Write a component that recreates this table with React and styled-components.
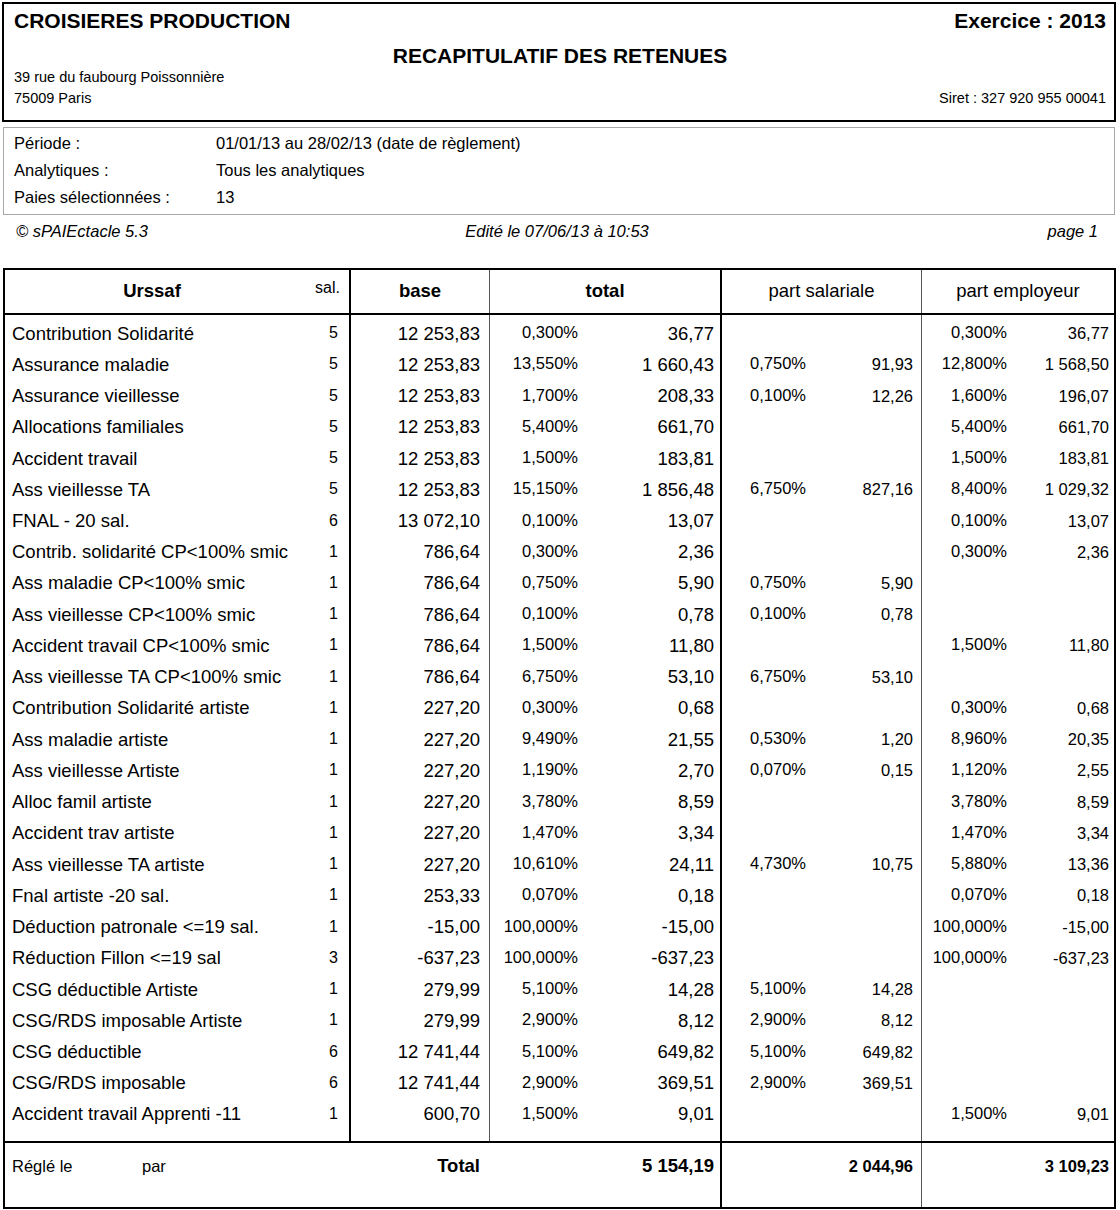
import React from 'react';
import styled, { createGlobalStyle } from 'styled-components';

const GlobalStyle = createGlobalStyle`
  html, body {
    margin: 0;
    padding: 0;
    background: #fff;
  }
  body {
    font-family: 'Liberation Sans', Arial, Helvetica, sans-serif;
    color: #000;
  }
`;

const rows = [
  ['Contribution Solidarité', 5, '12 253,83', '0,300%', '36,77', '', '', '0,300%', '36,77'],
  ['Assurance maladie', 5, '12 253,83', '13,550%', '1 660,43', '0,750%', '91,93', '12,800%', '1 568,50'],
  ['Assurance vieillesse', 5, '12 253,83', '1,700%', '208,33', '0,100%', '12,26', '1,600%', '196,07'],
  ['Allocations familiales', 5, '12 253,83', '5,400%', '661,70', '', '', '5,400%', '661,70'],
  ['Accident travail', 5, '12 253,83', '1,500%', '183,81', '', '', '1,500%', '183,81'],
  ['Ass vieillesse TA', 5, '12 253,83', '15,150%', '1 856,48', '6,750%', '827,16', '8,400%', '1 029,32'],
  ['FNAL - 20 sal.', 6, '13 072,10', '0,100%', '13,07', '', '', '0,100%', '13,07'],
  ['Contrib. solidarité CP<100% smic', 1, '786,64', '0,300%', '2,36', '', '', '0,300%', '2,36'],
  ['Ass maladie CP<100% smic', 1, '786,64', '0,750%', '5,90', '0,750%', '5,90', '', ''],
  ['Ass vieillesse CP<100% smic', 1, '786,64', '0,100%', '0,78', '0,100%', '0,78', '', ''],
  ['Accident travail CP<100% smic', 1, '786,64', '1,500%', '11,80', '', '', '1,500%', '11,80'],
  ['Ass vieillesse TA CP<100% smic', 1, '786,64', '6,750%', '53,10', '6,750%', '53,10', '', ''],
  ['Contribution Solidarité artiste', 1, '227,20', '0,300%', '0,68', '', '', '0,300%', '0,68'],
  ['Ass maladie artiste', 1, '227,20', '9,490%', '21,55', '0,530%', '1,20', '8,960%', '20,35'],
  ['Ass vieillesse Artiste', 1, '227,20', '1,190%', '2,70', '0,070%', '0,15', '1,120%', '2,55'],
  ['Alloc famil artiste', 1, '227,20', '3,780%', '8,59', '', '', '3,780%', '8,59'],
  ['Accident trav artiste', 1, '227,20', '1,470%', '3,34', '', '', '1,470%', '3,34'],
  ['Ass vieillesse TA artiste', 1, '227,20', '10,610%', '24,11', '4,730%', '10,75', '5,880%', '13,36'],
  ['Fnal artiste -20 sal.', 1, '253,33', '0,070%', '0,18', '', '', '0,070%', '0,18'],
  ['Déduction patronale <=19 sal.', 1, '-15,00', '100,000%', '-15,00', '', '', '100,000%', '-15,00'],
  ['Réduction Fillon <=19 sal', 3, '-637,23', '100,000%', '-637,23', '', '', '100,000%', '-637,23'],
  ['CSG déductible Artiste', 1, '279,99', '5,100%', '14,28', '5,100%', '14,28', '', ''],
  ['CSG/RDS imposable Artiste', 1, '279,99', '2,900%', '8,12', '2,900%', '8,12', '', ''],
  ['CSG déductible', 6, '12 741,44', '5,100%', '649,82', '5,100%', '649,82', '', ''],
  ['CSG/RDS imposable', 6, '12 741,44', '2,900%', '369,51', '2,900%', '369,51', '', ''],
  ['Accident travail Apprenti -11', 1, '600,70', '1,500%', '9,01', '', '', '1,500%', '9,01'],
];

const edge = (e) => (e === 'thick' ? '2px solid #000' : e === 'thin' ? '1px solid #555' : 'none');

const Page = styled.div`
  width: 1114px;
  padding: 2px 0 0 2px;
  display: flex;
  flex-direction: column;
`;

const HeaderBox = styled.div`
  height: 120px;
  box-sizing: border-box;
  border: 2px solid #000;
  padding: 5px 8px 0 10px;
  display: flex;
  flex-direction: column;
`;

const TitleRow = styled.div`
  display: flex;
  justify-content: space-between;
  font-size: 21px;
  font-weight: bold;
  line-height: 24px;
`;

const MainTitle = styled.div`
  text-align: center;
  font-size: 21px;
  font-weight: bold;
  line-height: 24px;
  margin-top: 11px;
`;

const AddressRow = styled.div`
  display: flex;
  justify-content: space-between;
  align-items: flex-end;
  font-size: 14.5px;
  line-height: 21px;
  margin-top: -1px;
`;

const InfoBox = styled.div`
  margin: 5px 1px 0 1px;
  height: 88px;
  box-sizing: border-box;
  border: 1px solid #a8a8a8;
  padding: 2px 10px 0 10px;
`;

const InfoRow = styled.div`
  display: grid;
  grid-template-columns: 202px 1fr;
  font-size: 16.5px;
  line-height: 27px;
`;

const Edition = styled.div`
  display: grid;
  grid-template-columns: 1fr auto 1fr;
  font-style: italic;
  font-size: 16.5px;
  line-height: 20px;
  margin-top: 6px;
  padding: 0 18px 0 14px;
  span:last-child {
    text-align: right;
  }
`;

const Table = styled.div`
  margin: 27px 0 0 1px;
  border: 2px solid #000;
  display: flex;
  flex-direction: column;
`;

const COLS = '346px 139px 232px 200px 1fr';

const HeadRow = styled.div`
  display: grid;
  grid-template-columns: ${COLS};
  height: 43px;
  border-bottom: 2px solid #000;
  font-size: 18.5px;
`;

const HeadCell = styled.div`
  display: flex;
  align-items: center;
  justify-content: center;
  padding-bottom: 2px;
  font-weight: ${(p) => (p.$bold ? 'bold' : 'normal')};
  border-right: ${(p) => edge(p.$edge)};
`;

const UrssafHead = styled.div`
  flex: 1;
  text-align: center;
  font-weight: bold;
`;

const SalHead = styled.div`
  width: 50px;
  padding-right: 9px;
  box-sizing: border-box;
  text-align: right;
  font-size: 16px;
  align-self: flex-start;
  margin-top: 9px;
`;

const BodyGrid = styled.div`
  display: grid;
  grid-template-columns: ${COLS};
`;

const Column = styled.div`
  display: flex;
  flex-direction: column;
  padding: 3px 0 10.8px;
  border-right: ${(p) => edge(p.$edge)};
`;

const Line = styled.div`
  height: 31.24px;
  display: flex;
  align-items: center;
  white-space: nowrap;
  font-size: 18.5px;
`;

const Label = styled.span`
  flex: 1;
  padding-left: 7px;
`;

const Sal = styled.span`
  width: 40px;
  padding-right: 11px;
  text-align: right;
  font-size: 16px;
  margin-top: -1px;
`;

const Amount = styled.span`
  flex: ${(p) => (p.$basis ? `0 0 ${p.$basis}px` : '1')};
  box-sizing: border-box;
  text-align: right;
  padding-right: ${(p) => p.$pad || 7}px;
  font-weight: ${(p) => (p.$bold ? 'bold' : 'normal')};
  font-size: ${(p) => p.$size || 18.5}px;
`;

const SmallAmount = styled(Amount)`
  font-size: 16.5px;
`;

const Rate = styled.span`
  width: ${(p) => p.$w || 93}px;
  box-sizing: border-box;
  padding-right: 8px;
  text-align: right;
  font-size: 16.5px;
  margin-top: -2px;
`;

const FootRow = styled.div`
  display: grid;
  grid-template-columns: 717px 200px 1fr;
  height: 64px;
  border-top: 2px solid #000;
`;

const FootCell = styled.div`
  display: flex;
  align-items: flex-start;
  padding-top: 11px;
  line-height: 24px;
  white-space: nowrap;
  border-right: ${(p) => edge(p.$edge)};
`;

const Small = styled.span`
  box-sizing: border-box;
  font-size: 16.5px;
  width: ${(p) => p.$w}px;
  padding-left: ${(p) => p.$pl || 0}px;
`;

export default function App() {
  return (
    <>
      <GlobalStyle />
      <Page>
        <HeaderBox>
          <TitleRow>
            <span>CROISIERES PRODUCTION</span>
            <span>Exercice : 2013</span>
          </TitleRow>
          <MainTitle>RECAPITULATIF DES RETENUES</MainTitle>
          <AddressRow>
            <div>
              <div>39 rue du faubourg Poissonnière</div>
              <div>75009 Paris</div>
            </div>
            <div>Siret : 327 920 955 00041</div>
          </AddressRow>
        </HeaderBox>

        <InfoBox>
          <InfoRow>
            <span>Période :</span>
            <span>01/01/13 au 28/02/13 (date de règlement)</span>
          </InfoRow>
          <InfoRow>
            <span>Analytiques :</span>
            <span>Tous les analytiques</span>
          </InfoRow>
          <InfoRow>
            <span>Paies sélectionnées :</span>
            <span>13</span>
          </InfoRow>
        </InfoBox>

        <Edition>
          <span>© sPAIEctacle 5.3</span>
          <span>Edité le 07/06/13 à 10:53</span>
          <span>page 1</span>
        </Edition>

        <Table>
          <HeadRow>
            <HeadCell $edge="thick">
              <UrssafHead>Urssaf</UrssafHead>
              <SalHead>sal.</SalHead>
            </HeadCell>
            <HeadCell $edge="thin" $bold>base</HeadCell>
            <HeadCell $edge="thick" $bold>total</HeadCell>
            <HeadCell $edge="thin">part salariale</HeadCell>
            <HeadCell>part employeur</HeadCell>
          </HeadRow>

          <BodyGrid>
            <Column $edge="thick">
              {rows.map((r) => (
                <Line key={r[0]}>
                  <Label>{r[0]}</Label>
                  <Sal>{r[1]}</Sal>
                </Line>
              ))}
            </Column>
            <Column $edge="thin">
              {rows.map((r) => (
                <Line key={r[0]}>
                  <Amount $pad={9}>{r[2]}</Amount>
                </Line>
              ))}
            </Column>
            <Column $edge="thick">
              {rows.map((r) => (
                <Line key={r[0]}>
                  <Rate $w={96}>{r[3]}</Rate>
                  <Amount $pad={6}>{r[4]}</Amount>
                </Line>
              ))}
            </Column>
            <Column $edge="thin">
              {rows.map((r) => (
                <Line key={r[0]}>
                  <Rate $w={92}>{r[5]}</Rate>
                  <SmallAmount $pad={8}>{r[6]}</SmallAmount>
                </Line>
              ))}
            </Column>
            <Column>
              {rows.map((r) => (
                <Line key={r[0]}>
                  <Rate $w={93}>{r[7]}</Rate>
                  <SmallAmount $pad={5}>{r[8]}</SmallAmount>
                </Line>
              ))}
            </Column>
          </BodyGrid>

          <FootRow>
            <FootCell $edge="thick">
              <Small $w={137} $pl={7}>Réglé le</Small>
              <Small $w={100}>par</Small>
              <Amount $bold $pad={9} $basis={247}>Total</Amount>
              <Amount $bold $pad={6}>5 154,19</Amount>
            </FootCell>
            <FootCell $edge="thin">
              <Amount $bold $pad={8} $size={16.5}>2 044,96</Amount>
            </FootCell>
            <FootCell>
              <Amount $bold $pad={5} $size={16.5}>3 109,23</Amount>
            </FootCell>
          </FootRow>
        </Table>
      </Page>
    </>
  );
}
